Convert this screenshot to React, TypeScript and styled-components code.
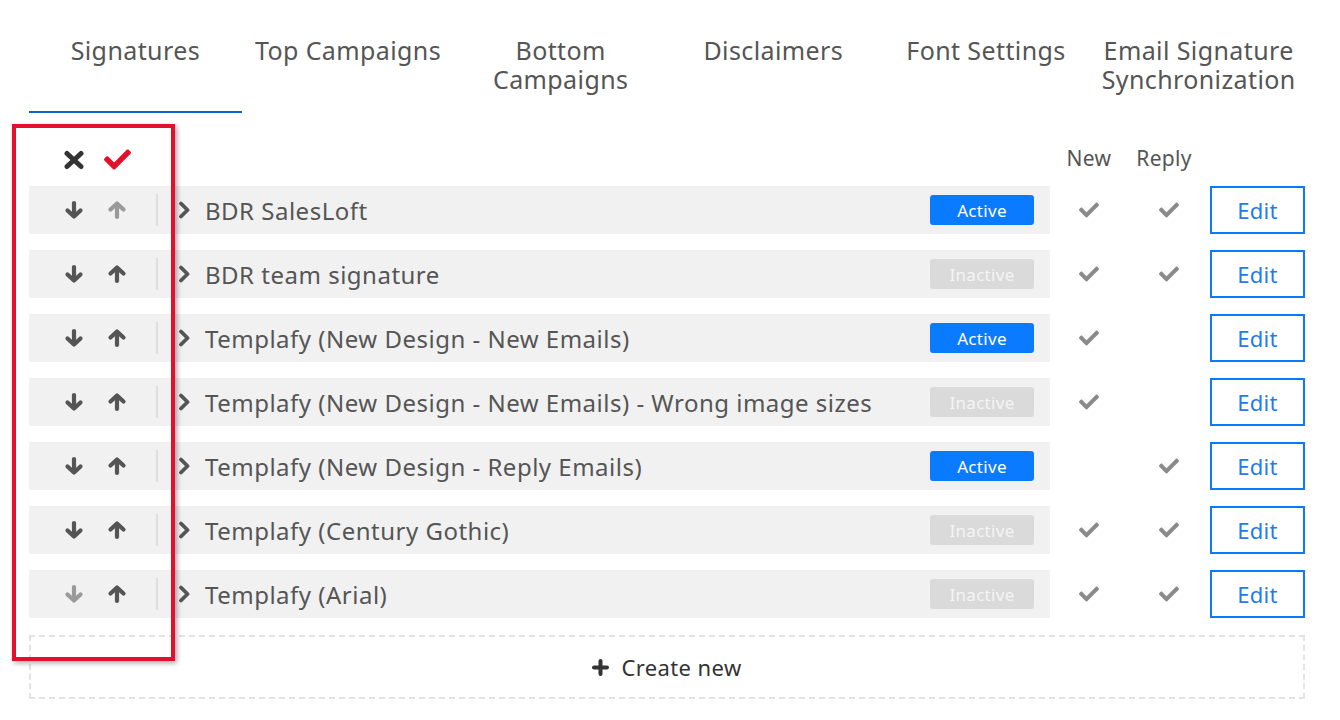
import React from 'react';
import styled, {createGlobalStyle} from 'styled-components';
import {FaCheck} from 'react-icons/fa';

const GlobalStyle = createGlobalStyle`
    body {
        margin: 0;
        background: #ffffff;
        font-family: "Noto Sans", "Open Sans", sans-serif;
        color: #555555;
    }
`;

const Page = styled.div`
    position: relative;
    width: 1340px;
    height: 720px;
    padding: 0 35px 0 29px;
    box-sizing: border-box;
`;

const Tabs = styled.div`
    display: grid;
    grid-template-columns: repeat(6, 1fr);
`;

const Tab = styled.div`
    height: 113px;
    box-sizing: border-box;
    padding-top: 36px;
    text-align: center;
    font-size: 25px;
    letter-spacing: 0.4px;
    line-height: 29px;
    color: #555555;
    border-bottom: 2px solid ${(props) => props.active ? '#0b63ce' : 'transparent'};
`;

const HeaderRow = styled.div`
    display: grid;
    grid-template-columns: 1021px 78px 82px 95px;
    align-items: center;
    height: 73px;
    padding-top: 20px;
    box-sizing: border-box;
`;

const HeaderIcons = styled.div`
    display: flex;
    align-items: center;
    gap: 19px;
    padding-left: 34px;
`;

const ColLabel = styled.div`
    text-align: center;
    font-size: 21px;
    letter-spacing: 0.3px;
    color: #555555;
    margin-top: -4px;
    margin-right: ${(props) => props.shift || 0}px;
`;

const List = styled.div`
    display: flex;
    flex-direction: column;
    gap: 16px;
`;

const Row = styled.div`
    display: grid;
    grid-template-columns: 1021px 78px 82px 95px;
    align-items: center;
    height: 48px;
`;

const RowBody = styled.div`
    display: flex;
    align-items: center;
    height: 100%;
    background: #f1f1f1;
`;

const Arrows = styled.div`
    display: flex;
    align-items: center;
    gap: 23px;
    padding-left: 35px;
    width: 127px;
    box-sizing: border-box;
`;

const ArrowIcon = styled.svg`
    display: block;
    width: 20px;
    height: 20px;
    color: ${(props) => props.muted ? '#9a9a9a' : '#555555'};
`;

const Separator = styled.div`
    width: 2px;
    height: 32px;
    background: #dedede;
`;

const Chevron = styled.svg`
    display: block;
    width: 12px;
    height: 18px;
    color: #555555;
    margin-left: 20px;
`;

const Name = styled.div`
    flex: 1;
    font-size: 24px;
    letter-spacing: 0.5px;
    color: #555555;
    margin-left: 15px;
    white-space: nowrap;
`;

const Badge = styled.div`
    width: 104px;
    height: 30px;
    margin-right: 16px;
    border-radius: 3px;
    display: flex;
    align-items: center;
    justify-content: center;
    font-size: 17px;
    letter-spacing: 0.3px;
    background: ${(props) => props.active ? '#0a7bff' : '#dadada'};
    color: ${(props) => props.active ? '#ffffff' : '#f4f4f4'};
`;

const CheckCell = styled.div`
    display: flex;
    justify-content: center;
    color: #8a8a8a;
    font-size: 20px;
`;

const EditButton = styled.button`
    height: 48px;
    width: 95px;
    background: #ffffff;
    border: 2px solid #0a7bff;
    color: #1c7cf0;
    font-family: inherit;
    font-size: 22px;
    letter-spacing: 0.3px;
    padding: 0;
    cursor: pointer;
`;

const CreateNew = styled.div`
    margin-top: 17px;
    height: 60px;
    border: 2px dashed #e3e3e3;
    display: flex;
    align-items: center;
    justify-content: center;
    gap: 12px;
    font-size: 22px;
    letter-spacing: 0.4px;
    color: #333333;
`;

const PlusIcon = styled.svg`
    display: block;
    width: 17px;
    height: 17px;
    color: #333333;
`;

const Highlight = styled.div`
    position: absolute;
    left: 12px;
    top: 124px;
    width: 163px;
    height: 537px;
    box-sizing: border-box;
    border: 4px solid #e3102c;
    box-shadow: 2px 2px 5px rgba(0, 0, 0, 0.35);
    pointer-events: none;
`;

const tabs = [
    'Signatures',
    'Top Campaigns',
    'Bottom Campaigns',
    'Disclaimers',
    'Font Settings',
    'Email Signature Synchronization',
];

const signatures = [
    {name: 'BDR SalesLoft', active: true, isNew: true, reply: true},
    {name: 'BDR team signature', active: false, isNew: true, reply: true},
    {name: 'Templafy (New Design - New Emails)', active: true, isNew: true, reply: false},
    {name: 'Templafy (New Design - New Emails) - Wrong image sizes', active: false, isNew: true, reply: false},
    {name: 'Templafy (New Design - Reply Emails)', active: true, isNew: false, reply: true},
    {name: 'Templafy (Century Gothic)', active: false, isNew: true, reply: true},
    {name: 'Templafy (Arial)', active: false, isNew: true, reply: true},
];

// bold FontAwesome-like arrows, drawn as thick strokes
const DownArrow = ({muted}: {muted?: boolean}) => (
    <ArrowIcon muted={muted} viewBox="0 0 20 20" fill="none" stroke="currentColor" strokeWidth="4.2" strokeLinecap="round" strokeLinejoin="round">
        <path d="M10 3v13M3.5 10.5l6.5 6 6.5-6" />
    </ArrowIcon>
);

const UpArrow = ({muted}: {muted?: boolean}) => (
    <ArrowIcon muted={muted} viewBox="0 0 20 20" fill="none" stroke="currentColor" strokeWidth="4.2" strokeLinecap="round" strokeLinejoin="round">
        <path d="M10 17V4M3.5 9.5l6.5-6 6.5 6" />
    </ArrowIcon>
);

const App = () => {
    return (
        <Page>
            <GlobalStyle />
            <Tabs>
                {tabs.map((t, i) => (
                    <Tab key={t} active={i === 0}>{t}</Tab>
                ))}
            </Tabs>
            <HeaderRow>
                <HeaderIcons>
                    <svg width="22" height="20" viewBox="0 0 22 20" fill="none" stroke="#333333" strokeWidth="5" strokeLinecap="round">
                        <path d="M4 3.5l14 13M18 3.5L4 16.5" />
                    </svg>
                    <FaCheck size={27} color="#e3102c" />
                </HeaderIcons>
                <ColLabel>New</ColLabel>
                <ColLabel shift={10}>Reply</ColLabel>
                <div />
            </HeaderRow>
            <List>
                {signatures.map((s, i) => (
                    <Row key={s.name}>
                        <RowBody>
                            <Arrows>
                                <DownArrow muted={i === signatures.length - 1} />
                                <UpArrow muted={i === 0} />
                            </Arrows>
                            <Separator />
                            <Chevron viewBox="0 0 12 18" fill="none" stroke="currentColor" strokeWidth="3.8" strokeLinecap="round" strokeLinejoin="round">
                                <path d="M3 2.5l6.5 6.5L3 15.5" />
                            </Chevron>
                            <Name>{s.name}</Name>
                            <Badge active={s.active}>{s.active ? 'Active' : 'Inactive'}</Badge>
                        </RowBody>
                        <CheckCell>{s.isNew && <FaCheck />}</CheckCell>
                        <CheckCell>{s.reply && <FaCheck />}</CheckCell>
                        <EditButton>Edit</EditButton>
                    </Row>
                ))}
            </List>
            <CreateNew>
                <PlusIcon viewBox="0 0 17 17" fill="none" stroke="currentColor" strokeWidth="4" strokeLinecap="round">
                    <path d="M8.5 2v13M2 8.5h13" />
                </PlusIcon>
                Create new
            </CreateNew>
            <Highlight />
        </Page>
    );
};

export default App;
